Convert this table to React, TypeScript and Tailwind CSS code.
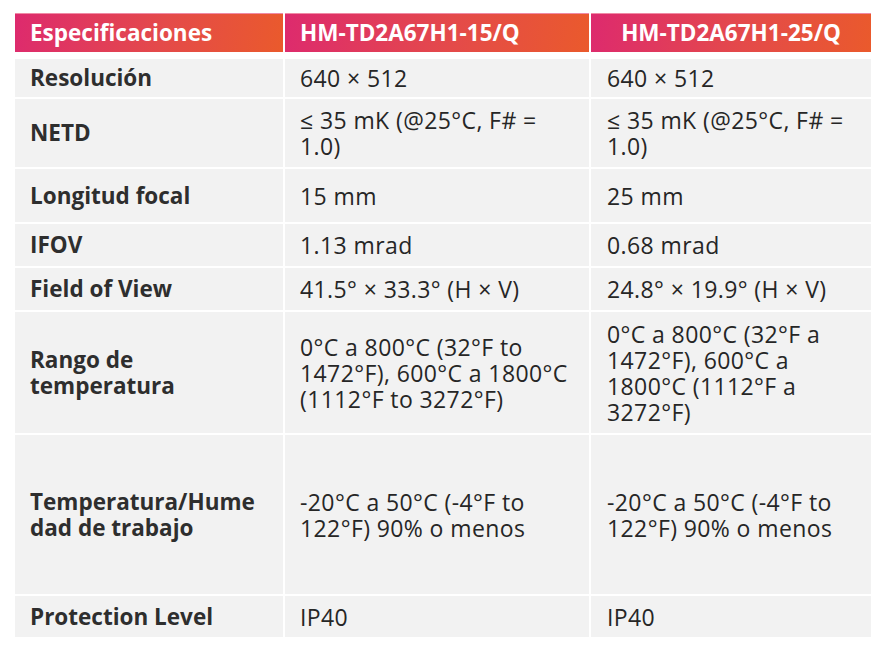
import React from "react";

type Row = { label: string[]; a: string[]; b: string[]; h: number };

const rows: Row[] = [
  { label: ["Resolución"], a: ["640 × 512"], b: ["640 × 512"], h: 38 },
  { label: ["NETD"], a: ["≤ 35 mK (@25°C, F# =", "1.0)"], b: ["≤ 35 mK (@25°C, F# =", "1.0)"], h: 68 },
  { label: ["Longitud focal"], a: ["15 mm"], b: ["25 mm"], h: 53 },
  { label: ["IFOV"], a: ["1.13 mrad"], b: ["0.68 mrad"], h: 42 },
  { label: ["Field of View"], a: ["41.5° × 33.3° (H × V)"], b: ["24.8° × 19.9° (H × V)"], h: 42 },
  {
    label: ["Rango de", "temperatura"],
    a: ["0°C a 800°C (32°F to", "1472°F), 600°C a 1800°C", "(1112°F to 3272°F)"],
    b: ["0°C a 800°C (32°F a", "1472°F), 600°C a", "1800°C (1112°F a", "3272°F)"],
    h: 121,
  },
  {
    label: ["Temperatura/Hume", "dad de trabajo"],
    a: ["-20°C a 50°C (-4°F to", "122°F) 90% o menos"],
    b: ["-20°C a 50°C (-4°F to", "122°F) 90% o menos"],
    h: 159,
  },
  { label: ["Protection Level"], a: ["IP40"], b: ["IP40"], h: 41 },
];

const grad = "bg-[linear-gradient(100deg,#dd2a6e_0%,#e44a4a_55%,#ea5a2c_100%)]";

function Lines({ lines }: { lines: string[] }) {
  return (
    <div className="flex flex-col">
      {lines.map((l, i) => (
        <span key={i} className="whitespace-nowrap">
          {l}
        </span>
      ))}
    </div>
  );
}

export default function App() {
  return (
    <div
      className="w-[886px] h-[654px] bg-white pl-[15px] pt-[13px] text-[#262626]"
      style={{ fontFamily: '"Open Sans", "Noto Sans", sans-serif' }}
    >
      <div className="w-[856px] flex flex-col">
        <div className="flex gap-[2px] h-[39px] text-white font-bold text-[22.5px]">
          <div className={`w-[268px] ${grad} flex items-center pl-[15px] border-t border-[#f08aa5]`}>
            Especificaciones
          </div>
          <div className={`w-[304px] ${grad} flex items-center pl-[15px] border-t border-[#f08aa5]`}>
            HM-TD2A67H1-15/Q
          </div>
          <div className={`w-[280px] ${grad} flex items-center justify-center border-t border-[#f08aa5]`}>
            HM-TD2A67H1-25/Q
          </div>
        </div>
        <div className="h-[7px]" />
        <div className="flex flex-col gap-[2px]">
          {rows.map((r) => (
            <div key={r.a[0] + r.label[0]} className="flex gap-[2px] leading-[26px]" style={{ height: r.h }}>
              <div className="w-[268px] bg-[#f2f2f2] flex items-center pl-[15px] font-bold text-[22.5px] text-[#2e2e2e]">
                <Lines lines={r.label} />
              </div>
              <div className="w-[304px] bg-[#f2f2f2] flex items-center pl-[15px] text-[23px] tracking-[0.4px]">
                <Lines lines={r.a} />
              </div>
              <div className="w-[280px] bg-[#f2f2f2] flex items-center pl-[16px] text-[23px] tracking-[0.4px]">
                <Lines lines={r.b} />
              </div>
            </div>
          ))}
        </div>
      </div>
    </div>
  );
}
